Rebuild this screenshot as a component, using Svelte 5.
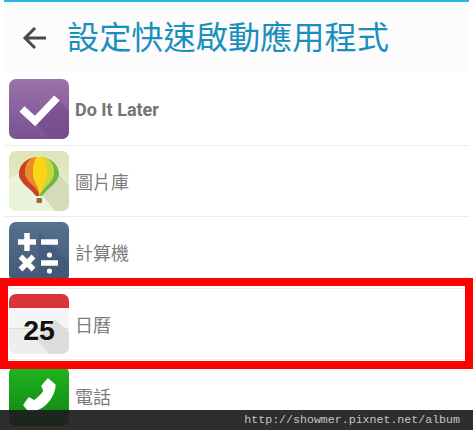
<script>
  const apps = [
    { id: 'later', name: 'Do It Later' },
    { id: 'gallery', name: '圖片庫' },
    { id: 'calc', name: '計算機' },
    { id: 'calendar', name: '日曆' },
    { id: 'phone', name: '電話' }
  ];

  // balloon stripes, painted right to left; x is where each one bulges to
  const gores = [
    { x: 45, color: '#c6d63c' },
    { x: 38, color: '#fcd514' },
    { x: 24, color: '#ea8a2d' },
    { x: 16, color: '#c9412a' }
  ];

  const gorePath = (x) => `M30 4C${x} 8 ${x} 16 ${x} 23C${x} 31 32 38 30 46H0V4Z`;
</script>

<div class="screen">
  <header class="title-bar">
    <svg class="back" viewBox="0 0 26 26" width="26" height="26">
      <path d="M24 13H4M13 3L3 13l10 10" fill="none" stroke="#4a4a4a" stroke-width="3" />
    </svg>
    <h1>設定快速啟動應用程式</h1>
  </header>

  <ul>
    {#each apps as app}
      <li>
        <svg class="icon" viewBox="0 0 60 60" width="60" height="60">
          {#if app.id === 'later'}
            <defs>
              <linearGradient id="lg-later" x1="0" y1="0" x2="0" y2="1">
                <stop offset="0" stop-color="#9a72aa" />
                <stop offset="1" stop-color="#7a5192" />
              </linearGradient>
            </defs>
            <rect width="60" height="60" rx="7" fill="url(#lg-later)" />
            <path d="M26 42L48 20 60 32V53a7 7 0 0 1-7 7H42z" fill="#6c4486" opacity="0.45" />
            <path d="M13 30l13 12 22-23" fill="none" stroke="#fff" stroke-width="7.500" />
          {:else if app.id === 'gallery'}
            <defs>
              <linearGradient id="lg-gallery" x1="0" y1="0" x2="0" y2="1">
                <stop offset="0" stop-color="#dfe3b8" />
                <stop offset="1" stop-color="#e4f2d0" />
              </linearGradient>
              <clipPath id="balloon-clip">
                <path d="M30 6C19 6 10 13 10 23c0 9 12 14 17 22h6c5-8 17-13 17-22C50 13 41 6 30 6z" />
              </clipPath>
            </defs>
            <rect width="60" height="60" rx="7" fill="url(#lg-gallery)" />
            <path d="M0 28l12-7 18 16 14-16 16 11v21a7 7 0 0 1-7 7H7a7 7 0 0 1-7-7z" fill="#eaf4da" />
            <path d="M33 44L50 24 60 34V53a7 7 0 0 1-7 7H46z" fill="#cdd4ae" opacity="0.8" />
            <g clip-path="url(#balloon-clip)">
              <rect x="8" y="4" width="44" height="42" fill="#6fb548" />
              {#each gores as gore}
                <path d={gorePath(gore.x)} fill={gore.color} />
              {/each}
            </g>
            <rect x="27.500" y="47" width="5.500" height="5" rx="1" fill="#a5683a" />
          {:else if app.id === 'calc'}
            <defs>
              <linearGradient id="lg-calc" x1="0" y1="0" x2="0" y2="1">
                <stop offset="0" stop-color="#56708f" />
                <stop offset="1" stop-color="#425a78" />
              </linearGradient>
            </defs>
            <rect width="60" height="60" rx="7" fill="url(#lg-calc)" />
            <path d="M30 10L60 40V53a7 7 0 0 1-7 7H30z" fill="#3c5270" opacity="0.4" />
            <path d="M9 20H27M18 11V29M32 20H49M11.500 34.500l13 13M24.500 34.500l-13 13M32 41H49" fill="none" stroke="#fff" stroke-width="5.500" />
            <circle cx="40.500" cy="33" r="2.600" fill="#fff" />
            <circle cx="40.500" cy="49" r="2.600" fill="#fff" />
          {:else if app.id === 'calendar'}
            <rect width="60" height="60" rx="7" fill="#f5f5f5" />
            <path d="M0 35H60V53a7 7 0 0 1-7 7H7a7 7 0 0 1-7-7z" fill="#eeeeee" />
            <path d="M0 34.500H60" stroke="#dcdcdc" stroke-width="1" />
            <path d="M27 45L46 25l14 14V53a7 7 0 0 1-7 7H40z" fill="#dddddd" />
            <path d="M0 14V7a7 7 0 0 1 7-7H53a7 7 0 0 1 7 7V14z" fill="#d9333c" />
            <text x="30" y="45.500" text-anchor="middle" class="date">25</text>
          {:else}
            <defs>
              <linearGradient id="lg-phone" x1="0" y1="0" x2="0" y2="1">
                <stop offset="0" stop-color="#1fb51f" />
                <stop offset="1" stop-color="#128212" />
              </linearGradient>
            </defs>
            <rect width="60" height="60" rx="7" fill="url(#lg-phone)" />
            <path d="M39 13L46 19C45 30 38 40 27 44L20 45 15 39 20 32 25 35C29 32 33 29 35 25L33 20Z" fill="#fff" stroke="#fff" stroke-width="1.500" stroke-linejoin="round" />
          {/if}
        </svg>
        <span class:latin={app.id === 'later'}>{app.name}</span>
      </li>
    {/each}
  </ul>

  <div class="highlight"></div>
  <div class="watermark">http://showmer.pixnet.net/album</div>
</div>

<style>
  :global(body) {
    margin: 0;
    background: #fff;
  }

  .screen {
    position: relative;
    width: 473px;
    height: 430px;
    overflow: hidden;
    background: #fff;
    font-family: "Noto Sans CJK TC", "Noto Sans", sans-serif;
  }

  .title-bar {
    display: flex;
    align-items: center;
    gap: 19px;
    height: 71px;
    box-sizing: border-box;
    margin: 0 4px;
    padding: 0 0 0 18px;
    background: #fcfcfc;
    border-top: 2px solid #29b6e6;
  }

  .back {
    margin-top: 2px;
  }

  h1 {
    margin: 0;
    padding-bottom: 3px;
    font-size: 32.2px;
    font-weight: 400;
    line-height: 1;
    color: #1a8fbd;
    white-space: nowrap;
  }

  ul {
    list-style: none;
    margin: 0 4px;
    padding: 3px 0 0;
  }

  li {
    display: flex;
    align-items: center;
    gap: 6px;
    height: 71.5px;
    padding: 0 0 0 5px;
    box-sizing: border-box;
    border-bottom: 1px solid #ececec;
    font-size: 18px;
    color: #7c7c7c;
  }

  li:last-child {
    border-bottom: none;
  }

  .icon {
    flex: none;
  }

  .latin {
    font-family: Roboto, sans-serif;
    font-weight: 700;
    font-size: 18px;
    color: #757575;
  }

  .date {
    font-family: "Liberation Sans", sans-serif;
    font-weight: 700;
    font-size: 28.500px;
    fill: #111;
  }

  .highlight {
    position: absolute;
    left: 0;
    top: 278px;
    width: 473px;
    height: 91px;
    box-sizing: border-box;
    border: 8px solid #fe0000;
  }

  .watermark {
    position: absolute;
    left: 0;
    right: 0;
    bottom: 0;
    height: 20px;
    padding-right: 13px;
    background: rgba(30, 30, 30, 0.93);
    color: #c4c4c4;
    font-family: "Liberation Mono", monospace;
    font-size: 11.6px;
    line-height: 20px;
    text-align: right;
  }
</style>
